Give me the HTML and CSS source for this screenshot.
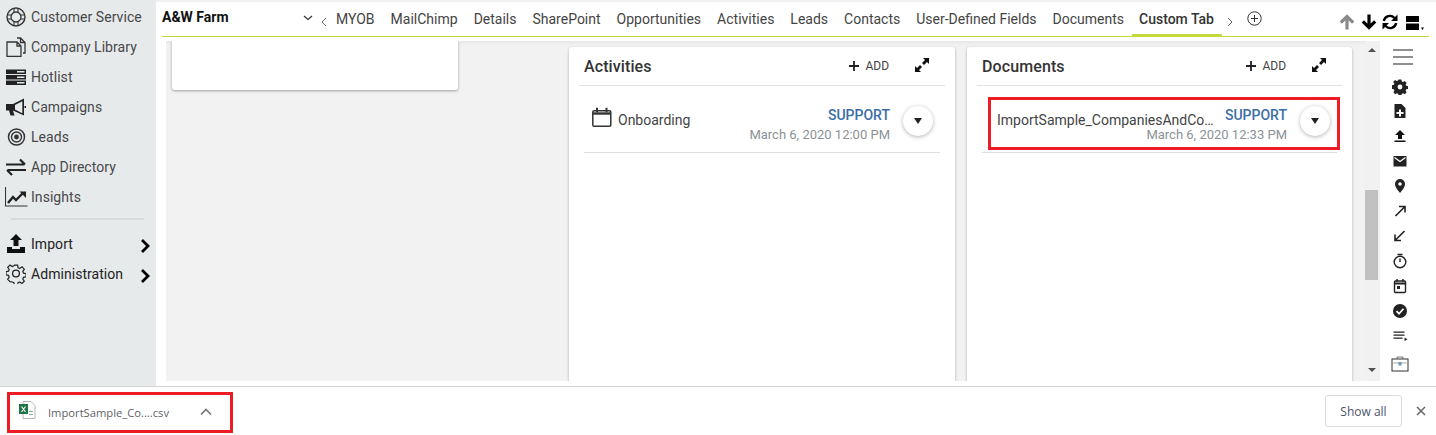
FILE: index.html
```html
<!DOCTYPE html>
<html lang="en">
<head>
<meta charset="utf-8">
<title>A&amp;W Farm</title>
<link rel="stylesheet" href="styles.css">
</head>
<body>
<div class="main">
  <nav class="sidebar">
    <div class="nav-item"><svg class="nav-icon" viewBox="0 0 20 20"><circle cx="10" cy="10" r="9" fill="none" stroke="#333" stroke-width="1.400"/><circle cx="10" cy="10" r="5" fill="none" stroke="#333" stroke-width="1.300"/><path d="M8 1.200v4.200M12 1.200v4.200M8 14.600v4.200M12 14.600v4.200M1.200 8h4.200M1.200 12h4.200M14.600 8h4.200M14.600 12h4.200" stroke="#333" stroke-width="1.100"/></svg><span>Customer Service</span></div>
    <div class="nav-item"><svg class="nav-icon" viewBox="0 0 20 20"><path d="M1 5h10l4 4v10.500H1zM11 5v4h4M11 1h3.500L19 5.500V16h-2M14.500 1v4.500H19" fill="none" stroke="#333" stroke-width="1.300"/></svg><span>Company Library</span></div>
    <div class="nav-item"><svg class="nav-icon" viewBox="0 0 20 20"><path d="M0 2.500h20v4.500H0zM0 8h20v4.500H0zM0 13.500h20V18H0z" fill="#222"/><path d="M11 4h7.500v1.500H11zM11 9.500h7.500V11H11zM11 15h7.500v1.500H11z" fill="#e7eaeb"/></svg><span>Hotlist</span></div>
    <div class="nav-item"><svg class="nav-icon" viewBox="0 0 20 20"><path d="M0 7h7v6.500H0zM7 7l11-5.500v17L7 13.500zM3 13.500h4l1.500 5H4.500z" fill="#222"/><path d="M9 7.900l7.300-3.600v11.900L9 12.600z" fill="#e7eaeb"/><path d="M18.500 9h1.500v2h-1.500z" fill="#222"/></svg><span>Campaigns</span></div>
    <div class="nav-item"><svg class="nav-icon" viewBox="0 0 20 20"><circle cx="10.500" cy="10" r="8" fill="none" stroke="#333" stroke-width="1.500"/><circle cx="10.500" cy="10" r="5" fill="none" stroke="#333" stroke-width="1.400"/><circle cx="10.500" cy="10" r="2.400" fill="#333"/></svg><span>Leads</span></div>
    <div class="nav-item"><svg class="nav-icon" viewBox="0 0 20 20"><path d="M0 7.500h18.500M14 2.500l5 5M20 13H1.500M6 18l-5-5" fill="none" stroke="#222" stroke-width="2.200"/></svg><span>App Directory</span></div>
    <div class="nav-item"><svg class="nav-icon nav-icon-wide" viewBox="0 0 23 20"><path d="M.5 0v19h22" fill="none" stroke="#333" stroke-width="1.100"/><path d="M3 16l5-6 3 3 7-7" fill="none" stroke="#222" stroke-width="2.400"/><path d="M14.500 4.500H21V11z" fill="#222"/></svg><span>Insights</span></div>
    <div class="nav-divider"></div>
    <div class="nav-item"><svg class="nav-icon" viewBox="0 0 20 20"><path d="M10 0l6 6h-3.500v6h-5V6H4zM1 13h5v2h8v-2h5v6H1z" fill="#111"/></svg><span class="nav-strong">Import</span><svg class="nav-chevron" viewBox="0 0 10 14"><path d="M2 1l6 6-6 6" fill="none" stroke="#000" stroke-width="2.800"/></svg></div>
    <div class="nav-item"><svg class="nav-icon" viewBox="0 0 20 20"><path d="M8.400 .8h3.200l.5 2.600 1.700.7 2.200-1.500 2.300 2.300-1.500 2.200.7 1.700 2.600.5v3.200l-2.600.5-.7 1.700 1.500 2.200-2.300 2.300-2.200-1.500-1.700.7-.5 2.500H8.400l-.5-2.500-1.700-.7L4 17.300 1.700 15l1.500-2.200-.7-1.700L0 10.600V7.400l2.500-.5.700-1.700L1.700 3 4 .7l2.200 1.500 1.700-.7z" transform="translate(0 .3)" fill="none" stroke="#222" stroke-width="1.200"/><circle cx="10" cy="9.500" r="3.400" fill="none" stroke="#222" stroke-width="1.300"/></svg><span class="nav-strong">Administration</span><svg class="nav-chevron" viewBox="0 0 10 14"><path d="M2 1l6 6-6 6" fill="none" stroke="#000" stroke-width="2.800"/></svg></div>
  </nav>

  <div class="workspace">
    <div class="top-strip"></div>
    <header class="header">
      <div class="account">A&amp;W Farm</div>
      <svg class="acct-caret" viewBox="0 0 10 6"><path d="M1 1l4 3.500L9 1" fill="none" stroke="#333" stroke-width="1.200"/></svg>
      <svg class="tab-arrow" viewBox="0 0 6 10"><path d="M5 1L1 5l4 4" fill="none" stroke="#666" stroke-width="1"/></svg>
      <div class="tabs">
        <span class="tab">MYOB</span>
        <span class="tab">MailChimp</span>
        <span class="tab">Details</span>
        <span class="tab">SharePoint</span>
        <span class="tab">Opportunities</span>
        <span class="tab">Activities</span>
        <span class="tab">Leads</span>
        <span class="tab">Contacts</span>
        <span class="tab">User-Defined Fields</span>
        <span class="tab">Documents</span>
        <span class="tab tab-active">Custom Tab</span>
      </div>
      <svg class="tab-arrow tab-arrow-next" viewBox="0 0 6 10"><path d="M1 1l4 4-4 4" fill="none" stroke="#666" stroke-width="1"/></svg>
      <svg class="tab-add" viewBox="0 0 15 15"><circle cx="7.500" cy="7.500" r="6.700" fill="none" stroke="#333" stroke-width="1"/><path d="M7.500 4v7M4 7.500h7" stroke="#333" stroke-width="1"/></svg>
      <div class="tools">
        <svg class="tool" viewBox="0 0 16 16"><path d="M8 15.500V3M1.800 8.700L8 2.500l6.200 6.200" fill="none" stroke="#8a8a8a" stroke-width="3.200"/></svg>
        <svg class="tool" viewBox="0 0 16 16"><path d="M8 .5V13M1.800 7.300L8 13.500l6.200-6.200" fill="none" stroke="#000" stroke-width="3.200"/></svg>
        <svg class="tool tool-sync" viewBox="0 0 16 16"><path d="M1.800 7a6.200 6.200 0 0 1 10.700-3" fill="none" stroke="#000" stroke-width="2.300"/><path d="M15.500 .5v6.500H9zM.5 15.500V9H7z" fill="#000"/><path d="M14.200 9a6.200 6.200 0 0 1-10.700 3" fill="none" stroke="#000" stroke-width="2.300"/></svg>
        <svg class="tool tool-layout" viewBox="0 0 18 14"><path d="M0 0h13v6H0zM0 7.500h13V14H0zM15 11.500h3L16.500 14z" fill="#000"/></svg>
      </div>
    </header>

    <div class="body">
      <div class="canvas">
        <div class="blank-card"></div>

        <section class="card">
          <div class="card-head">
            <h2 class="card-title">Activities</h2>
            <div class="add"><svg class="plus" viewBox="0 0 11 11"><path d="M4.500 0h2v4.500H11v2H6.500V11h-2V6.500H0v-2h4.500z" fill="#222"/></svg><span>ADD</span></div>
            <svg class="expand" viewBox="0 0 14 14"><path d="M14 0v6l-2-2-3 3-2-2 3-3-2-2zM0 14V8l2 2 3-3 2 2-3 3 2 2z" fill="#111"/></svg>
          </div>
          <div class="row">
            <svg class="cal" viewBox="0 0 20 20"><rect x=".8" y="3.800" width="18" height="15.400" rx="1.300" fill="none" stroke="#333" stroke-width="1.500"/><path d="M1 6.500h18" stroke="#333" stroke-width="2.400"/><path d="M5 .8v4.500M14.500 .8v4.500" stroke="#333" stroke-width="2"/></svg>
            <div class="row-name">Onboarding</div>
            <div class="row-meta"><div class="owner">SUPPORT</div><div class="date">March 6, 2020 12:00 PM</div></div>
            <div class="round-btn"><span class="tri"></span></div>
          </div>
        </section>

        <section class="card">
          <div class="card-head">
            <h2 class="card-title">Documents</h2>
            <div class="add"><svg class="plus" viewBox="0 0 11 11"><path d="M4.500 0h2v4.500H11v2H6.500V11h-2V6.500H0v-2h4.500z" fill="#222"/></svg><span>ADD</span></div>
            <svg class="expand" viewBox="0 0 14 14"><path d="M14 0v6l-2-2-3 3-2-2 3-3-2-2zM0 14V8l2 2 3-3 2 2-3 3 2 2z" fill="#111"/></svg>
          </div>
          <div class="row row-doc">
            <div class="row-name row-name-doc">ImportSample_CompaniesAndContacts.csv</div>
            <div class="row-meta row-meta-doc"><div class="owner">SUPPORT</div><div class="date">March 6, 2020 12:33 PM</div></div>
            <div class="round-btn"><span class="tri"></span></div>
            <div class="highlight"></div>
          </div>
        </section>
      </div>

      <div class="scrollbar">
        <span class="sb-up"></span>
        <span class="sb-thumb"></span>
        <span class="sb-down"></span>
      </div>

      <aside class="rail">
        <div class="hamburger"><i></i><i></i><i></i></div>
        <svg class="rail-icon rail-first" viewBox="0 0 16 16"><path d="M6.500 1h3l.4 2 1.400.6 1.700-1.100 2 2-1.100 1.700.6 1.400 2 .4v2.900l-2 .4-.6 1.400 1.100 1.700-2 2-1.700-1.100-1.400.6-.4 2h-3l-.4-2-1.400-.6-1.700 1.100-2-2 1.100-1.700-.6-1.400-2-.4V7l2-.4.600-1.400L.8 3.500l2-2 1.700 1.100 1.400-.6z" transform="translate(.4 -.4) scale(.95)" fill="#222"/><circle cx="8" cy="8" r="2.400" fill="#fff"/></svg>
        <svg class="rail-icon" viewBox="0 0 16 16"><path d="M2.500 1h7l4 4v10h-11z" fill="#222"/><path d="M7 6.500h2V9h2.500v2H9v2.500H7V11H4.500V9H7z" fill="#fff"/></svg>
        <svg class="rail-icon" viewBox="0 0 16 16"><path d="M8 2l5 5h-3v4H6V7H3zM2.500 12.500h11V14h-11z" fill="#111"/></svg>
        <svg class="rail-icon" viewBox="0 0 16 16"><path d="M1.500 3h13v10.500h-13z" fill="#222"/><path d="M2.500 4.500L8 8.500l5.500-4" fill="none" stroke="#fff" stroke-width="1.300"/></svg>
        <svg class="rail-icon" viewBox="0 0 16 16"><path d="M8 1a5 5 0 0 1 5 5c0 3.500-5 9-5 9S3 9.500 3 6a5 5 0 0 1 5-5z" fill="#222"/><circle cx="8" cy="6" r="1.800" fill="#fff"/></svg>
        <svg class="rail-icon" viewBox="0 0 16 16"><path d="M3.500 13L12.500 4M7 3.500h6v6" fill="none" stroke="#222" stroke-width="1.600"/></svg>
        <svg class="rail-icon" viewBox="0 0 16 16"><path d="M12.500 3L3.500 12M3 6.500v6h6" fill="none" stroke="#222" stroke-width="1.600"/></svg>
        <svg class="rail-icon" viewBox="0 0 16 16"><circle cx="8" cy="9" r="5.800" fill="none" stroke="#222" stroke-width="1.400"/><path d="M5.500 1.500h5M8 5.500V9" stroke="#222" stroke-width="1.400"/></svg>
        <svg class="rail-icon" viewBox="0 0 16 16"><rect x="2.500" y="3" width="11" height="11.500" rx="1" fill="none" stroke="#222" stroke-width="1.400"/><path d="M2.500 5.500h11" stroke="#222" stroke-width="2"/><path d="M5 1v3M11 1v3" stroke="#222" stroke-width="1.400"/><path d="M5 8h3v3H5z" fill="#222"/></svg>
        <svg class="rail-icon" viewBox="0 0 16 16"><circle cx="8" cy="8" r="7" fill="#222"/><path d="M4.500 8.200l2.500 2.500 4.500-5" fill="none" stroke="#fff" stroke-width="1.700"/></svg>
        <svg class="rail-icon" viewBox="0 0 16 16"><path d="M1.500 3.500h11v1.300h-11zM1.500 6.500h11v1.300h-11zM1.500 9.500h9v1.300h-9z" fill="#222"/><path d="M12.500 9.500l3 1.800-3 1.800z" fill="#222"/></svg>
        <svg class="rail-icon rail-case" viewBox="0 0 18 18"><path d="M6 4V2h6v2" fill="none" stroke="#777" stroke-width="1"/><rect x="1" y="4" width="16" height="12" fill="#fff" stroke="#333" stroke-width="1"/><path d="M1 8h16" stroke="#999" stroke-width=".8"/><rect x="7.500" y="7" width="3" height="3.500" fill="#6a93b5"/></svg>
      </aside>
    </div>
  </div>
</div>

<footer class="downloads">
  <div class="dl-item">
    <svg class="xls" viewBox="0 0 18 18"><path d="M5 .5h8l4 4v13H5z" fill="#fff" stroke="#b5b5b5" stroke-width="1"/><path d="M1 3h9v10H1z" fill="#1f7244"/><path d="M3.500 5.500l4 5.500M7.500 5.500l-4 5.500" stroke="#fff" stroke-width="1.100"/><path d="M11 10h4v1h-4zM11 13h4v1h-4z" fill="#7fb69a"/></svg>
    <span class="dl-name">ImportSample_Co....csv</span>
    <svg class="dl-caret" viewBox="0 0 12 8"><path d="M1 6.500l5-5 5 5" fill="none" stroke="#777" stroke-width="1.700"/></svg>
  </div>
  <div class="dl-actions">
    <div class="show-all">Show all</div>
    <svg class="dl-close" viewBox="0 0 10 10"><path d="M1 1l8 8M9 1l-8 8" stroke="#666" stroke-width="1.500"/></svg>
  </div>
</footer>
</body>
</html>
```

FILE: styles.css
```css
* { box-sizing: border-box; }
html, body { margin: 0; padding: 0; }
body {
  width: 1436px;
  height: 435px;
  overflow: hidden;
  background: #fff;
  font-family: Roboto, "Liberation Sans", sans-serif;
  color: #3c4043;
}
.main { display: flex; height: 386px; }

/* sidebar */
.sidebar {
  width: 156px;
  flex: none;
  background: #e7eaeb;
  padding-top: 2px;
}
.nav-item {
  display: flex;
  align-items: center;
  height: 30px;
  padding-left: 6px;
  font-size: 14px;
  color: #48484a;
  letter-spacing: .05px;
}
.nav-icon { width: 20px; height: 20px; margin-right: 5px; flex: none; }
.nav-icon-wide { width: 23px; margin-left: -1px; margin-right: 3px; }
.nav-strong { color: #222; }
.nav-chevron { width: 10px; height: 14px; margin-left: auto; margin-right: 6px; margin-top: 4px; }
.nav-divider { height: 2px; margin: 6px 12px 9px 11px; background: #d9dadb; }

/* workspace */
.workspace { flex: 1; display: flex; flex-direction: column; min-width: 0; }
.top-strip { height: 2px; background: #f1f1f1; }
.header {
  height: 35px;
  margin: 0 7px 0 6px;
  border-bottom: 1.5px solid #c4d93c;
  display: flex;
  flex: none;
}
.account { font-size: 14px; font-weight: 700; color: #111; padding-top: 7px; width: 141px; flex: none; }
.acct-caret { width: 10px; height: 6px; margin-top: 13px; flex: none; }
.tab-arrow { width: 6px; height: 10px; margin: 15px 0 0 8px; flex: none; }
.tabs { display: flex; margin-left: 2px; height: 100%; }
.tab {
  font-size: 14px;
  color: #444;
  padding: 9px 8px 0 8px;
  white-space: nowrap;
  line-height: 17px;
}
.tabs .tab:first-child { margin-left: -1px; }
.tab-active {
  color: #333;
  font-weight: 500;
  padding: 9px 8px 0 7px;
  border-bottom: 3px solid #c4d93c;
  height: 35px;
}
.tab-arrow-next { margin: 15px 0 0 5px; }
.tab-add { width: 15px; height: 15px; margin: 9px 0 0 14px; flex: none; }
.tools { display: flex; align-items: center; margin-left: auto; padding: 7px 5px 0 0; gap: 6px; height: 32px; }
.tool { width: 16px; height: 16px; }
.tool-sync { margin-left: -1px; }
.tool-layout { width: 18px; height: 14px; margin-left: 2px; margin-top: 3px; }

/* body */
.body { flex: 1; display: flex; min-height: 0; padding: 4px 0 5px 10px; }
.canvas {
  width: 1199px;
  flex: none;
  background: #f2f2f2;
  display: flex;
  overflow: hidden;
  padding-left: 6px;
  box-shadow: inset 0 5px 3px -3px #e6e6e6;
}
.blank-card {
  width: 286px;
  height: 49px;
  flex: none;
  background: #fff;
  border-radius: 0 0 3px 3px;
  box-shadow: 0 1px 3px rgba(0,0,0,.35);
}
.card {
  width: 386px;
  height: 360px;
  flex: none;
  margin: 6px 12px 0 0;
  background: #fff;
  border-radius: 3px;
  box-shadow: 0 1px 3px rgba(0,0,0,.3);
  padding: 0 10px;
}
.blank-card + .card { margin-left: 111px; }
.card + .card { width: 385px; }
.card-head {
  height: 39px;
  border-bottom: 1px solid #e3e3e3;
  display: flex;
  align-items: center;
  padding-left: 5px;
}
.card-title { margin: 0; font-size: 16px; font-weight: 500; color: #333; flex: 1; letter-spacing: .1px; }
.add { display: flex; align-items: center; font-size: 12px; color: #444; margin-right: 26px; }
.plus { width: 10px; height: 10px; margin-right: 6px; }
.expand { width: 14px; height: 14px; margin-right: 16px; margin-top: -3px; flex: none; }
.row {
  height: 67px;
  margin: 0 5px;
  border-bottom: 1px solid #ddd;
  display: flex;
  position: relative;
  padding-left: 8px;
}
.cal { width: 20px; height: 20px; margin-top: 21px; flex: none; }
.row-name { font-size: 14px; color: #444; margin: 27px 0 0 6px; line-height: 14px; flex: 1; white-space: nowrap; }
.row-doc { padding-left: 15px; }
.row-name-doc {
  margin-left: 0;
  flex: none;
  width: 217px;
  height: 17px;
  overflow: hidden;
  text-overflow: ellipsis;
}
.row-meta {
  display: flex;
  flex-direction: column;
  align-items: flex-end;
  padding-top: 21px;
  width: 150px;
  margin-right: 13px;
  flex: none;
}
.row-meta-doc { width: 73px; flex: 1; }
.owner { font-size: 14px; font-weight: 500; color: #3a6ea5; line-height: 17px; }
.date { font-size: 13px; color: #8c9196; line-height: 15px; margin-top: 3px; white-space: nowrap; }
.round-btn {
  width: 30px;
  height: 30px;
  border-radius: 50%;
  background: #fff;
  box-shadow: 0 1px 4px rgba(0,0,0,.3);
  margin: 20px 7px 0 0;
  display: flex;
  align-items: center;
  justify-content: center;
  flex: none;
}
.tri {
  width: 0;
  height: 0;
  border-left: 4px solid transparent;
  border-right: 4px solid transparent;
  border-top: 6px solid #222;
}
.highlight {
  position: absolute;
  left: 6px;
  right: -3px;
  top: 11px;
  height: 53px;
  border: 3px solid #ed1c24;
}

/* scrollbar */
.scrollbar {
  width: 15px;
  flex: none;
  background: #f1f1f1;
  display: flex;
  flex-direction: column;
  align-items: flex-start;
}
.sb-up, .sb-down {
  width: 0; height: 0;
  margin-left: 2.500px;
  border-left: 4px solid transparent;
  border-right: 4px solid transparent;
}
.sb-up { border-bottom: 4px solid #505050; margin-top: 7px; }
.sb-thumb { width: 13px; height: 90px; background: #c1c1c1; margin-top: 138px; }
.sb-down { border-top: 4px solid #505050; margin-top: 88px; }

/* rail */
.rail { flex: 1; display: flex; flex-direction: column; align-items: center; padding-right: 16px; padding-top: 8px; background: #fff; }
.hamburger { width: 20px; display: flex; flex-direction: column; gap: 5px; margin: 0 0 14px 6px; }
.hamburger i { display: block; height: 2px; background: #8e8e8e; }
.rail-icon { width: 16px; height: 16px; margin-bottom: 9px; flex: none; }
.rail-first { margin-bottom: 8px; }
.rail-case { width: 18px; height: 18px; margin-top: 2px; }

/* downloads */
.downloads {
  height: 49px;
  border-top: 1px solid #d4d4d4;
  display: flex;
  align-items: flex-start;
  justify-content: space-between;
  padding: 5px 6px 0 7px;
  font-family: "Open Sans", "Liberation Sans", sans-serif;
}
.dl-item {
  width: 226px;
  height: 41px;
  border: 3px solid #ed1c24;
  display: flex;
  align-items: center;
  padding-left: 8px;
}
.xls { width: 18px; height: 18px; margin-top: -6px; flex: none; }
.dl-name { font-size: 11.200px; color: #5f6368; margin-left: 12px; width: 152px; flex: none; white-space: nowrap; }
.dl-caret { width: 12px; height: 8px; margin-top: -2px; }
.dl-actions { display: flex; align-items: center; padding-top: 3px; }
.show-all {
  width: 77px;
  height: 32px;
  border: 1px solid #dadce0;
  border-radius: 3px;
  font-size: 12px;
  color: #4a5568;
  display: flex;
  align-items: center;
  justify-content: center;
}
.dl-close { width: 10px; height: 10px; margin-left: 14px; margin-right: 4px; }
```
